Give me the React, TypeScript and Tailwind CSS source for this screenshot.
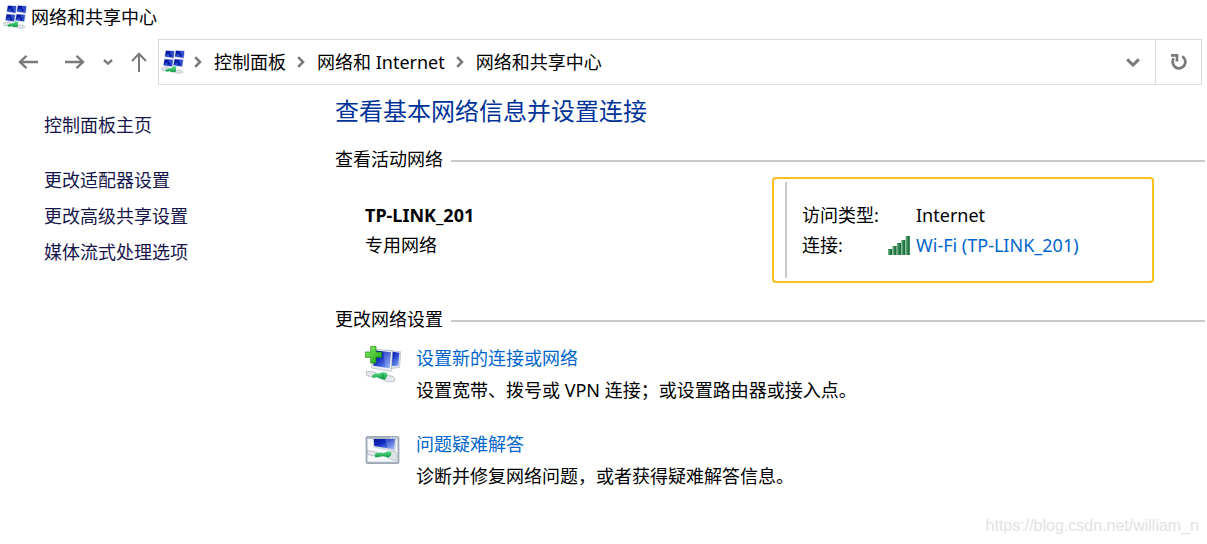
import React from "react";

const breadcrumbs = ["控制面板", "网络和 Internet", "网络和共享中心"];

const sideLinks = ["更改适配器设置", "更改高级共享设置", "媒体流式处理选项"];

function IconGradients() {
  return (
    <defs>
      <linearGradient id="screen" x1="0" y1="0" x2="0.9" y2="1">
        <stop offset="0" stopColor="#0a1590" />
        <stop offset="0.4" stopColor="#1028c0" />
        <stop offset="1" stopColor="#7aa4f6" />
      </linearGradient>
      <linearGradient id="plug" x1="0" y1="0" x2="0" y2="1">
        <stop offset="0" stopColor="#5fe08c" />
        <stop offset="1" stopColor="#109a45" />
      </linearGradient>
      <linearGradient id="cross" x1="0" y1="0" x2="1" y2="1">
        <stop offset="0" stopColor="#8df06a" />
        <stop offset="1" stopColor="#17a010" />
      </linearGradient>
    </defs>
  );
}

function NetworkCenterIcon() {
  const screens = [
    [12, 1],
    [42, 1],
    [8, 27],
    [38, 27],
  ];
  return (
    <svg viewBox="0 0 72 72" className="size-6 shrink-0" aria-hidden="true">
      <IconGradients />
      {screens.map(([x, y]) => (
        <g key={`${x}-${y}`} transform={`translate(${x} ${y})`}>
          <path d="M1 -1 L30 1 L27 25 L-2 21 Z" fill="#c5d0ee" />
          <path d="M3 1 L27 3 L25 22 L0 18 Z" fill="#0818a0" />
          <path d="M17 2 L27 3 L25 21 L18 20 L20 11 L14 10 Z" fill="#3c63e0" opacity="0.7" />
          <path d="M1 15 L11 9 L16 20 L0 18 Z" fill="#3058d8" opacity="0.8" />
        </g>
      ))}
      <path d="M1 54 L20 51 L26 59 L4 62 Z" fill="#dfe4e8" stroke="#a9b0b8" strokeWidth="1.5" />
      <path d="M42 60 L60 60 L66 67 L54 71 L40 67 Z" fill="#dfe4e8" stroke="#a9b0b8" strokeWidth="1.5" />
      <path d="M13 60 Q22 54 33 54 L37 48 L46 51 L44 66 L32 67 L27 64 L15 65 Z" fill="url(#plug)" />
    </svg>
  );
}

function NewConnectionIcon() {
  return (
    <svg viewBox="0 0 108 114" className="h-[38px] w-9 shrink-0" aria-hidden="true">
      <path d="M62 12 L107 17 L104 64 L76 68 Z" fill="#dfe4ec" stroke="#9aa3ae" strokeWidth="1.5" />
      <path d="M66 15 L103 20 L100 59 L78 60 Z" fill="url(#screen)" />
      <path d="M24 8 L83 15 L79 76 L20 66 Z" fill="#eef1f4" stroke="#8f99a6" strokeWidth="1.5" />
      <path d="M28 13 L78 19 L74 67 L25 59 Z" fill="url(#screen)" />
      <path d="M54 16 L78 19 L74 67 L62 65 Z" fill="#fff" opacity="0.2" />
      <path d="M17 1 H33 V18 H50 V34 H33 V51 H17 V34 H0 V18 H17 Z" fill="url(#cross)" stroke="#168c10" strokeWidth="2" />
      <path d="M3 77 Q16 74 32 80 L38 91 Q20 94 5 89 Z" fill="#e6e9ec" stroke="#a5acb3" strokeWidth="2" />
      <path d="M58 87 L84 91 Q94 97 88 106 L70 108 L52 101 Z" fill="#e6e9ec" stroke="#a5acb3" strokeWidth="2" />
      <path d="M22 87 Q30 80 45 82 L54 78 L65 80 L68 88 L60 101 L46 98 L36 94 L22 96 Z" fill="url(#plug)" />
      <path d="M48 83 L56 87 L53 98" fill="none" stroke="#0b8038" strokeWidth="2" />
    </svg>
  );
}

function TroubleshootIcon() {
  return (
    <svg viewBox="0 0 104 86" className="mt-1 h-7 w-[35px] shrink-0" aria-hidden="true">
      <rect x="1.5" y="1.5" width="101" height="83" rx="4" fill="#a9b5c3" stroke="#7f8a97" strokeWidth="2" />
      <path d="M75 5 h5 M85 5 h5 M94 5 h5" stroke="#f4f6f8" strokeWidth="3" />
      <rect x="6" y="9" width="92" height="70" fill="#f7f9fb" />
      <path d="M22 9 L96 9 L92 48 L24 36 Z" fill="#d4dae2" />
      <path d="M25 9 L90 9 L87 41 L27 31 Z" fill="url(#screen)" />
      <path d="M60 9 L90 9 L87 41 L68 38 Z" fill="#fff" opacity="0.2" />
      <path d="M6 45 L36 50 L38 63 L6 57 Z" fill="#e4e8eb" stroke="#a5acb3" strokeWidth="2" />
      <path d="M68 54 L82 46 L97 52 L97 76 L84 74 L66 66 Z" fill="#dfe4e8" stroke="#b2b9c0" strokeWidth="2" />
      <path d="M28 55 Q42 48 56 52 L70 46 L80 51 L78 61 L70 66 L54 62 L30 66 Z" fill="url(#plug)" />
    </svg>
  );
}

function SignalIcon() {
  return (
    <svg viewBox="0 0 22 19" className="h-[19px] w-[22px] shrink-0" aria-hidden="true">
      <defs>
        <linearGradient id="bar" x1="0" y1="0" x2="1" y2="0">
          <stop offset="0" stopColor="#7cb893" />
          <stop offset="0.6" stopColor="#1f7a41" />
          <stop offset="1" stopColor="#176534" />
        </linearGradient>
      </defs>
      {[13, 10, 7, 4, 0].map((top, i) => (
        <rect key={top} x={i * 4.4} y={top} width="4.2" height={19 - top} fill="url(#bar)" />
      ))}
    </svg>
  );
}

function Crumb({ label }: { label: string }) {
  return (
    <li className="flex items-center">
      <svg viewBox="0 0 8 12" className="mr-3 h-3 w-2" fill="none" stroke="#7a7a7a" strokeWidth="2.6" aria-hidden="true">
        <path d="M1.2 1.2 L6 6 L1.2 10.8" />
      </svg>
      <a href="#">{label}</a>
    </li>
  );
}

function SectionTitle({ children }: { children: React.ReactNode }) {
  return (
    <div className="flex items-center gap-2">
      <h2 className="leading-6">{children}</h2>
      <div className="mt-1 h-[2px] flex-1 bg-[#c8c8c8]" />
    </div>
  );
}

type TaskProps = {
  icon: React.ReactNode;
  title: string;
  text: string;
};

function Task({ icon, title, text }: TaskProps) {
  return (
    <div className="flex pl-[30px] leading-8">
      <div className="w-[51px] shrink-0 pt-1">{icon}</div>
      <div>
        <a href="#" className="text-[#0066cc]">
          {title}
        </a>
        <p>{text}</p>
      </div>
    </div>
  );
}

export default function App() {
  return (
    <div className="relative min-h-screen bg-white font-['Noto_Sans','Noto_Sans_CJK_SC',sans-serif] text-[18px] text-black">
      {/* Title bar */}
      <header className="flex h-[34px] items-center gap-1 pl-[3px]">
        <NetworkCenterIcon />
        <h1 className="leading-6">网络和共享中心</h1>
      </header>

      {/* Navigation */}
      <nav className="flex items-center pt-[5px] pr-[5px]">
        <div className="flex w-[158px] shrink-0 items-center pl-[18px]">
          <button aria-label="后退">
            <svg viewBox="0 0 20 16" className="h-4 w-5" fill="none" stroke="#7a7a7a" strokeWidth="2.4">
              <path d="M20 8 H2 M8.5 1.8 L2 8 L8.5 14.2" />
            </svg>
          </button>
          <button aria-label="前进" className="ml-[27px]">
            <svg viewBox="0 0 20 16" className="h-4 w-5" fill="none" stroke="#7a7a7a" strokeWidth="2.4">
              <path d="M0 8 H18 M11.5 1.8 L18 8 L11.5 14.2" />
            </svg>
          </button>
          <button aria-label="最近浏览的位置" className="ml-[18px]">
            <svg viewBox="0 0 10 6" className="h-[6px] w-[10px]" fill="none" stroke="#7a7a7a" strokeWidth="2.4">
              <path d="M1 1 L5 4.6 L9 1" />
            </svg>
          </button>
          <button aria-label="向上" className="ml-[18px]">
            <svg viewBox="0 0 16 20" className="h-5 w-4" fill="none" stroke="#7a7a7a" strokeWidth="2">
              <path d="M8 20 V2 M1 9 L8 1.8 L15 9" />
            </svg>
          </button>
        </div>
        <div className="flex h-[46px] flex-1 border border-[#d9d9d9]">
          <div className="flex flex-1 items-center pl-[2px]">
            <NetworkCenterIcon />
            <ol className="ml-[9px] flex gap-[11px]">
              {breadcrumbs.map((label) => (
                <Crumb key={label} label={label} />
              ))}
            </ol>
            <button aria-label="展开地址栏" className="mr-[15px] ml-auto">
              <svg viewBox="0 0 14 9" className="h-[9px] w-[14px]" fill="none" stroke="#7a7a7a" strokeWidth="3">
                <path d="M1.2 1.4 L7 7 L12.8 1.4" />
              </svg>
            </button>
          </div>
          <button aria-label="刷新" className="flex w-[46px] items-center justify-center border-l border-[#d9d9d9]">
            <svg viewBox="0 0 18 18" className="size-[18px]" fill="none" stroke="#7a7a7a" strokeWidth="2.8">
              <path d="M12.2 3.4 A6.4 6.4 0 1 1 3.8 5.2" />
              <path d="M1 2.4 H7 V8.6" strokeWidth="2.6" />
            </svg>
          </button>
        </div>
      </nav>

      <div className="flex pr-[2px]">
        {/* Sidebar */}
        <aside className="w-[335px] shrink-0 pt-[22px] pl-[44px] leading-9 text-[#15154b]">
          <a href="#">控制面板主页</a>
          <ul className="mt-[19px]">
            {sideLinks.map((label) => (
              <li key={label}>
                <a href="#">{label}</a>
              </li>
            ))}
          </ul>
        </aside>

        <main className="min-w-0 flex-1 pt-2">
          <p className="text-2xl leading-9 text-[#003399]">查看基本网络信息并设置连接</p>

          {/* Active network */}
          <section className="mt-[18px]">
            <SectionTitle>查看活动网络</SectionTitle>
            <div className="mt-[6px] grid grid-cols-2">
              <div className="pt-[23px] pl-[30px] leading-[30px]">
                <p className="font-bold">TP-LINK_201</p>
                <p>专用网络</p>
              </div>
              <div className="mr-[51px] ml-[2px] rounded-[4px] border-2 border-[#fcbf1e] py-[3px] pl-[11px]">
                <dl className="grid grid-cols-[86px_1fr] border-l-2 border-[#c8c8c8] py-[18px] pl-[15px] leading-[30px]">
                  <dt>访问类型:</dt>
                  <dd className="pl-7">Internet</dd>
                  <dt>连接:</dt>
                  <dd>
                    <a href="#" className="flex items-center gap-[6px] text-[#0066cc]">
                      <SignalIcon />
                      Wi-Fi (TP-LINK_201)
                    </a>
                  </dd>
                </dl>
              </div>
            </div>
          </section>

          {/* Network settings */}
          <section className="mt-[24px]">
            <SectionTitle>更改网络设置</SectionTitle>
            <div className="mt-[11px] space-y-[22px]">
              <Task
                icon={<NewConnectionIcon />}
                title="设置新的连接或网络"
                text="设置宽带、拨号或 VPN 连接；或设置路由器或接入点。"
              />
              <Task
                icon={<TroubleshootIcon />}
                title="问题疑难解答"
                text="诊断并修复网络问题，或者获得疑难解答信息。"
              />
            </div>
          </section>
        </main>
      </div>

      <span className="absolute right-2 bottom-2 font-['Liberation_Sans',sans-serif] text-base leading-5 text-[#e2e2e2]">
        https://blog.csdn.net/william_n
      </span>
    </div>
  );
}
